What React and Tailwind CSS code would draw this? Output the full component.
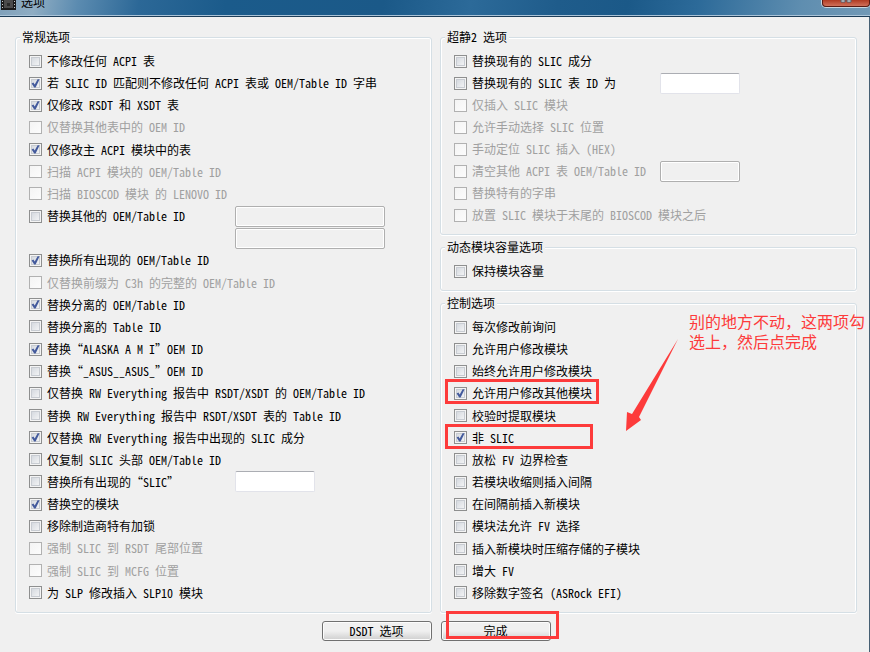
import { useId } from 'react';

// ── Option data ───────────────────────────────────────────────────────────────

const GENERAL = [
  { text: '不修改任何 ACPI 表' },
  { text: '若 SLIC ID 匹配则不修改任何 ACPI 表或 OEM/Table ID 字串', checked: true },
  { text: '仅修改 RSDT 和 XSDT 表', checked: true },
  { text: '仅替换其他表中的 OEM ID', disabled: true },
  { text: '仅修改主 ACPI 模块中的表', checked: true },
  { text: '扫描 ACPI 模块的 OEM/Table ID', disabled: true },
  { text: '扫描 BIOSCOD 模块 的 LENOVO ID', disabled: true },
  { text: '替换其他的 OEM/Table ID', field: 'wide', fieldDisabled: true },
  { fieldOnly: 'OEM/Table ID 2' },
  { text: '替换所有出现的 OEM/Table ID', checked: true },
  { text: '仅替换前缀为 C3h 的完整的 OEM/Table ID', disabled: true },
  { text: '替换分离的 OEM/Table ID', checked: true },
  { text: '替换分离的 Table ID' },
  { text: '替换“ALASKA A M I”OEM ID', checked: true },
  { text: '替换“_ASUS__ASUS_”OEM ID' },
  { text: '仅替换 RW Everything 报告中 RSDT/XSDT 的 OEM/Table ID' },
  { text: '替换 RW Everything 报告中 RSDT/XSDT 表的 Table ID' },
  { text: '仅替换 RW Everything 报告中出现的 SLIC 成分', checked: true },
  { text: '仅复制 SLIC 头部 OEM/Table ID' },
  { text: '替换所有出现的“SLIC”', field: 'short' },
  { text: '替换空的模块', checked: true },
  { text: '移除制造商特有加锁' },
  { text: '强制 SLIC 到 RSDT 尾部位置', disabled: true },
  { text: '强制 SLIC 到 MCFG 位置', disabled: true },
  { text: '为 SLP 修改插入 SLP10 模块' },
];

const SLIC = [
  { text: '替换现有的 SLIC 成分' },
  { text: '替换现有的 SLIC 表 ID 为', field: 'short' },
  { text: '仅插入 SLIC 模块', disabled: true },
  { text: '允许手动选择 SLIC 位置', disabled: true },
  { text: '手动定位 SLIC 插入 (HEX)', disabled: true },
  { text: '清空其他 ACPI 表 OEM/Table ID', disabled: true, field: 'short', fieldDisabled: true },
  { text: '替换特有的字串', disabled: true },
  { text: '放置 SLIC 模块于末尾的 BIOSCOD 模块之后', disabled: true },
];

const DYNAMIC = [{ text: '保持模块容量' }];

const CONTROL = [
  { text: '每次修改前询问' },
  { text: '允许用户修改模块' },
  { text: '始终允许用户修改模块' },
  { text: '允许用户修改其他模块', checked: true, mark: 'w-[154px]' },
  { text: '校验时提取模块' },
  { text: '非 SLIC', checked: true, mark: 'w-[148px]' },
  { text: '放松 FV 边界检查' },
  { text: '若模块收缩则插入间隔' },
  { text: '在间隔前插入新模块' },
  { text: '模块法允许 FV 选择' },
  { text: '插入新模块时压缩存储的子模块' },
  { text: '增大 FV' },
  { text: '移除数字签名 (ASRock EFI)' },
];

// ── Controls ──────────────────────────────────────────────────────────────────

function TextField({ size, disabled, label }) {
  return (
    <input
      type="text"
      aria-label={label}
      disabled={disabled}
      className={`h-[21px] rounded-[2px] border px-1 outline-none ${size === 'wide' ? 'w-[150px]' : 'w-20'} ${
        disabled
          ? 'border-[#afafaf] bg-[#f0f0f0] shadow-[inset_0_0_0_1px_#fff]'
          : 'border-[#e2e3ea] border-t-[#abadb3] bg-white'
      }`}
    />
  );
}

function CheckBox({ id, checked, disabled }) {
  return (
    <span className="grid size-[13px] shrink-0">
      <input
        id={id}
        type="checkbox"
        defaultChecked={checked}
        disabled={disabled}
        className="peer col-start-1 row-start-1 size-[13px] appearance-none border border-[#8e8f8f]
                   bg-linear-to-br from-[#ced3da] to-[#fafafa]
                   shadow-[inset_0_0_0_1px_#f4f4f4,inset_0_0_0_2px_#c8ccd2]
                   disabled:border-[#b1b1b1] disabled:from-[#f4f4f4] disabled:to-[#fcfcfc] disabled:shadow-none"
      />
      <svg className="pointer-events-none col-start-1 row-start-1 hidden size-[13px] peer-checked:block" viewBox="0 0 13 13">
        <path d="M2.6 6.4 L4.4 5.6 L5.7 7.6 L8.6 2.2 L10.6 2.2 L6.6 10.4 L5.2 10.4 Z" fill="#435a9c" />
      </svg>
    </span>
  );
}

function OptionRow({ item }) {
  const id = useId();

  if (item.fieldOnly) {
    return (
      <div className="flex h-[22px] items-end pl-[206px]">
        <TextField size="wide" disabled label={item.fieldOnly} />
      </div>
    );
  }

  return (
    <div className="relative flex h-[22px] items-center">
      <div className={`flex items-center gap-[5px] whitespace-nowrap ${item.field ? 'w-[206px]' : ''}`}>
        <CheckBox id={id} checked={item.checked} disabled={item.disabled} />
        <label htmlFor={id} className={item.disabled ? 'text-[#a0a0a0]' : ''}>{item.text}</label>
      </div>
      {item.field && <TextField size={item.field} disabled={item.fieldDisabled} label={item.text} />}
      {item.mark && (
        <span className={`pointer-events-none absolute -top-[3px] -left-[9px] h-[25px] border-3 border-[#fd3b3b] ${item.mark}`} />
      )}
    </div>
  );
}

function Group({ title, items, grow, children }) {
  return (
    <fieldset
      className={`relative flex min-w-0 flex-col rounded-[3px] border border-[#d5dfe5] px-[13px] pt-[5px] pb-2
                  shadow-[inset_1px_1px_0_#fff,inset_-1px_0_0_#fff,0_1px_0_#fff] ${grow ? 'flex-1' : ''}`}
    >
      <legend className="-ml-[9px] bg-[#f0f0f0] px-0.5 leading-4">{title}</legend>
      <div className="flex h-full flex-col justify-between">
        {items.map((item) => <OptionRow key={item.text || item.fieldOnly} item={item} />)}
      </div>
      {children}
    </fieldset>
  );
}

function PushButton({ children }) {
  return (
    <button
      type="button"
      className="h-5 w-[110px] rounded-[3px] border border-[#707070] bg-linear-to-b from-[#f0f0f0] from-50%
                 to-[#cfcfcf] to-100% leading-4 shadow-[inset_0_0_0_1px_#fcfcfc]"
    >
      {children}
    </button>
  );
}

// ── Window ────────────────────────────────────────────────────────────────────

function TitleBar() {
  return (
    <header
      className="flex h-[17px] items-start overflow-hidden border-b border-[#1d3d58] pl-px
                 bg-[linear-gradient(100deg,#7fa0ba_0%,#8fadc3_4%,#5b8bb0_9%,#2c6897_16%,#1b5b8b_26%,#1b5988_44%,#2c6a99_54%,#1f5c8b_64%,#1b5988_72%,#2c6a99_80%,#5f8eb0_92%,#7299b6_100%)]
                 shadow-[inset_0_-1px_0_#a9c3d8]"
    >
      <svg className="h-[10px] w-[15px]" viewBox="0 0 15 10">
        <rect width="15" height="10" fill="#1c1c1c" />
        <rect x="3" width="9" height="8" fill="#4b4b4b" />
        <rect x="6" y="3" width="3" height="3" fill="#2a2a2a" />
        <path d="M1 1.5h1M1 4.5h1M1 7.5h1M13 1.5h1M13 4.5h1M13 7.5h1" stroke="#c8c8c8" />
      </svg>
      <h1 className="-mt-1.5 ml-[5px] leading-4">选项</h1>
      <button
        type="button"
        aria-label="关闭"
        className="ml-auto flex h-[7px] w-12 justify-center rounded-b-[4px] border border-t-0 border-[#5a1a12]
                   bg-linear-to-b from-[#b03a22] to-[#d0705a] shadow-[0_0_0_1px_#c9d6df]"
      >
        <svg className="h-[3px] w-3" viewBox="0 0 12 3">
          <path d="M1 0h4v2h-4zM7 0h4v2h-4z" fill="#f4f4f4" stroke="#55606e" />
        </svg>
      </button>
    </header>
  );
}

// Red remark with the arrow that starts below it
function Note() {
  return (
    <div className="pointer-events-none absolute top-0 left-[184px] flex items-start gap-2.5">
      <svg className="mt-[27px] h-[94px] w-[54px]" viewBox="0 0 54 94">
        <path d="M1 93 L2 74 L7 76 L53 1 L14 79 L16 82 Z" fill="#fd3b3b" />
      </svg>
      <p className="w-44 text-base leading-5 text-[#fd3b3b]">
        别的地方不动，这两项勾选上，然后点完成
      </p>
    </div>
  );
}

export default function App() {
  return (
    <div
      className="flex min-h-screen flex-col overflow-hidden bg-[#f0f0f0] text-xs text-black
                 font-['Noto_Sans_Mono_CJK_SC','Liberation_Mono','Noto_Sans_CJK_SC',monospace]"
    >
      <TitleBar />
      <main className="flex flex-1 flex-col border-r border-[#465f73] pt-3 pr-3 pb-[11px] pl-[15px]">
        <div className="flex flex-1 gap-2">
          <div className="flex flex-1 flex-col">
            <Group title="常规选项" items={GENERAL} grow />
          </div>
          <div className="flex flex-1 flex-col gap-1">
            <Group title="超静2 选项" items={SLIC} />
            <Group title="动态模块容量选项" items={DYNAMIC} />
            <Group title="控制选项" items={CONTROL} grow>
              <Note />
            </Group>
          </div>
        </div>

        <div className="mt-2 grid grid-cols-2 gap-[9px]">
          <div className="flex justify-end">
            <PushButton>DSDT 选项</PushButton>
          </div>
          <div className="relative">
            <PushButton>完成</PushButton>
            <span className="pointer-events-none absolute -top-2.5 left-[5px] h-7 w-[113px] border-3 border-[#fd3b3b]" />
          </div>
        </div>
      </main>
    </div>
  );
}
